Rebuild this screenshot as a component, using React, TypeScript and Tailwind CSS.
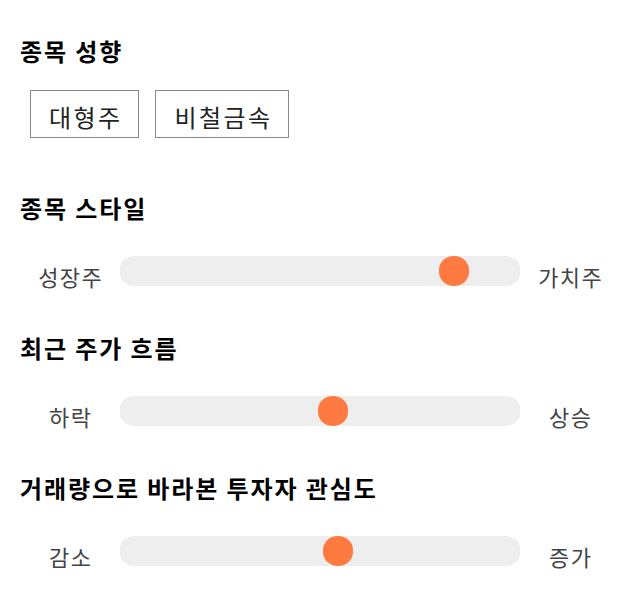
import React from "react";

type SliderProps = { left: string; right: string; pos: number };

function Slider({ left, right, pos }: SliderProps) {
  return (
    <div className="mt-[33px] flex items-start">
      <div className="mt-[5px] h-[30px] w-[100px] shrink-0 pl-[1.5px] text-center text-[22px] leading-[30px] tracking-[1.5px] text-[#444]">
        {left}
      </div>
      <div className="relative h-[30px] flex-1 rounded-[15px/12px] bg-[#eeeeee]">
        <div
          className="absolute top-0 h-[30px] w-[30px] rounded-[15px/14px] bg-[#ff7a40]"
          style={{ left: `${pos}px` }}
        />
      </div>
      <div className="mt-[5px] h-[30px] w-[100px] shrink-0 pl-[1.5px] text-center text-[22px] leading-[30px] tracking-[1.5px] text-[#444]">
        {right}
      </div>
    </div>
  );
}

function Heading({ children, className = "" }: { children: React.ReactNode; className?: string }) {
  return (
    <h2 className={`text-[24px] font-bold leading-[30px] tracking-[1.9px] text-black ${className}`}>
      {children}
    </h2>
  );
}

export default function App() {
  return (
    <div className="min-h-[606px] w-[640px] bg-white px-5 pt-[36px] font-['Noto_Sans_CJK_KR','Noto_Sans',sans-serif]">
      <Heading>종목 성향</Heading>
      <div className="ml-[10px] mt-[24px] flex gap-4">
        <div className="flex h-[48px] items-center border border-[#888] pl-[18px] pr-[16px] pt-[6px] text-[24px] tracking-[2.4px] text-[#222]">
          대형주
        </div>
        <div className="flex h-[48px] items-center border border-[#888] pl-[18px] pr-[16px] pt-[6px] text-[24px] tracking-[2.4px] text-[#222]">
          비철금속
        </div>
      </div>

      <Heading className="mt-[55px]">종목 스타일</Heading>
      <Slider left="성장주" right="가치주" pos={319} />

      <Heading className="mt-[42px]">최근 주가 흐름</Heading>
      <Slider left="하락" right="상승" pos={198} />

      <Heading className="mt-[42px]">거래량으로 바라본 투자자 관심도</Heading>
      <Slider left="감소" right="증가" pos={203} />
    </div>
  );
}
